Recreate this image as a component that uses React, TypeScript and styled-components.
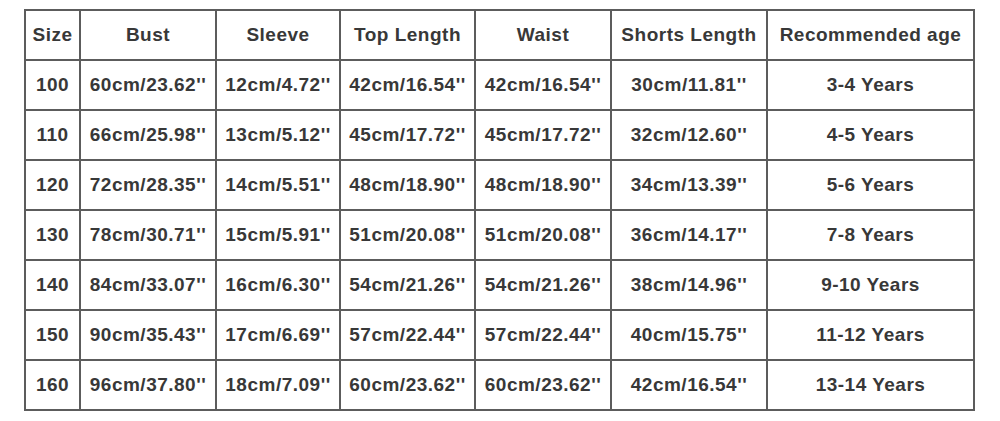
import styled, { createGlobalStyle } from "styled-components";

const GlobalStyle = createGlobalStyle`
  html, body {
    margin: 0;
    padding: 0;
    background: #ffffff;
  }
  body {
    font-family: "Liberation Sans", Arial, sans-serif;
  }
`;

const columns = [
  { title: "Size", width: 55 },
  { title: "Bust", width: 136 },
  { title: "Sleeve", width: 124 },
  { title: "Top Length", width: 135 },
  { title: "Waist", width: 136 },
  { title: "Shorts Length", width: 156 },
  { title: "Recommended age", width: 207 },
];

const rows = [
  ["100", "60cm/23.62''", "12cm/4.72''", "42cm/16.54''", "42cm/16.54''", "30cm/11.81''", "3-4 Years"],
  ["110", "66cm/25.98''", "13cm/5.12''", "45cm/17.72''", "45cm/17.72''", "32cm/12.60''", "4-5 Years"],
  ["120", "72cm/28.35''", "14cm/5.51''", "48cm/18.90''", "48cm/18.90''", "34cm/13.39''", "5-6 Years"],
  ["130", "78cm/30.71''", "15cm/5.91''", "51cm/20.08''", "51cm/20.08''", "36cm/14.17''", "7-8 Years"],
  ["140", "84cm/33.07''", "16cm/6.30''", "54cm/21.26''", "54cm/21.26''", "38cm/14.96''", "9-10 Years"],
  ["150", "90cm/35.43''", "17cm/6.69''", "57cm/22.44''", "57cm/22.44''", "40cm/15.75''", "11-12 Years"],
  ["160", "96cm/37.80''", "18cm/7.09''", "60cm/23.62''", "60cm/23.62''", "42cm/16.54''", "13-14 Years"],
];

const Page = styled.div`
  width: 1000px;
  height: 421px;
  padding: 9px 0 0 24px;
  box-sizing: border-box;
`;

const Table = styled.table`
  border-collapse: collapse;
  table-layout: fixed;
  width: 951px;
  color: #383838;
`;

const Cell = styled.td`
  height: 48px;
  padding: 0;
  border: 2px solid #5c5c5c;
  text-align: center;
  vertical-align: middle;
  font-size: 19px;
  font-weight: bold;
  white-space: nowrap;
  letter-spacing: 0.5px;
`;

const HeadCell = styled(Cell).attrs({ as: "th" })``;

export default function App() {
  return (
    <>
      <GlobalStyle />
      <Page>
        <Table>
          <colgroup>
            {columns.map((c) => (
              <col key={c.title} style={{ width: c.width }} />
            ))}
          </colgroup>
          <thead>
            <tr>
              {columns.map((c) => (
                <HeadCell key={c.title}>{c.title}</HeadCell>
              ))}
            </tr>
          </thead>
          <tbody>
            {rows.map((r) => (
              <tr key={r[0]}>
                {r.map((v, i) => (
                  <Cell key={i}>{v}</Cell>
                ))}
              </tr>
            ))}
          </tbody>
        </Table>
      </Page>
    </>
  );
}
